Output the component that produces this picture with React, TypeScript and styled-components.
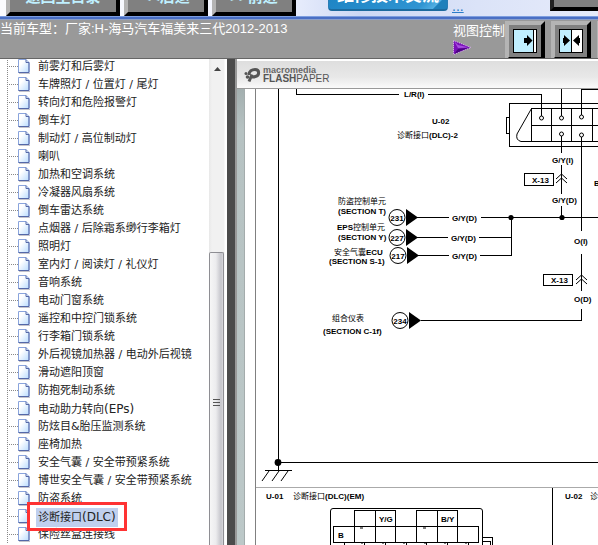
import React from "react";
import styled, { createGlobalStyle } from "styled-components";

const GlobalStyle = createGlobalStyle`
  * { box-sizing: border-box; }
  html, body, #root { height: 100%; }
  body {
    margin: 0;
    overflow: hidden;
    background: #fff;
    font-family: "Liberation Sans", "Noto Sans CJK SC", sans-serif;
  }
  button { font-family: inherit; margin: 0; }
`;

const Page = styled.div`
  height: 100vh;
  display: flex;
  flex-direction: column;
  overflow: hidden;
`;

const TopBar = styled.header`
  flex: none;
  height: 16px;
  display: flex;
  align-items: flex-end;
  padding-left: 6px;
  overflow: hidden;
  background: linear-gradient(90deg, #fbfcff 0%, #f2f5ff 45%, #cdd8f4 60%, #dbe3f8 80%, #e6ebfa 100%);
`;

const BlueRule = styled.div`
  flex: none;
  height: 4px;
  background: linear-gradient(180deg, #7d9ee0 0 1px, #4a6fc4 1px 3px, #8b9fc9 3px);
`;

const NavButton = styled.button<{ $width: number }>`
  flex: none;
  width: ${(p) => p.$width}px;
  height: 34px;
  margin-right: 4px;
  padding: 0 0 4px;
  border: 4px solid;
  border-color: #b4b4b4 #000 #000 #b4b4b4;
  background: #808080;
  color: #bff0ff;
  font-size: 15px;
  font-weight: bold;
  line-height: 16px;
`;

const ForumButton = styled.button`
  flex: none;
  width: 120px;
  height: 34px;
  margin: 0 4px 5px 28px;
  padding: 4px 0 0;
  border: 1px solid #2a7cb4;
  border-bottom: 2px solid #1c6a9e;
  border-radius: 4px;
  background: linear-gradient(135deg, #1b82c2, #2f94d2 80%, #51aee2 90%, #1f80bb 91%);
  color: #fff;
  font-size: 17px;
  font-weight: bold;
  line-height: 20px;
`;

const MoreLink = styled.a`
  color: #2a7cc8;
  font-size: 14px;
  line-height: 16px;
  margin-bottom: 2px;
`;

const CornerButton = styled.button`
  flex: 0 0 60px;
  height: 34px;
  margin: 0 -12px 5px auto;
  border: 4px solid;
  border-color: #b4b4b4 #000 #000 #222;
  background: #808080;
`;

const VehicleBar = styled.div`
  flex: none;
  height: 39px;
  display: flex;
  align-items: flex-start;
  background: #999;
  border-bottom: 1px solid #666;
  color: #fff;
  font-size: 13px;
  line-height: 18px;
  overflow: hidden;
`;

const VehicleName = styled.div`
  flex: 1 0 auto;
  white-space: nowrap;
`;

const ViewLabel = styled.div`
  flex: none;
  display: flex;
  flex-direction: column;
  padding-top: 2px;
  svg { display: block; }
`;

const ViewButtons = styled.div`
  flex: 0 0 93px;
  display: flex;
  gap: 6px;
  padding-top: 1px;
  overflow: hidden;
`;

const ViewButton = styled.button`
  flex: none;
  width: 40px;
  height: 40px;
  padding: 4px;
  border: 4px solid;
  border-color: #b4b4b4 #000 #000 #b4b4b4;
  background: #808080;
  svg { display: block; }
`;

const Body = styled.main`
  flex: 1;
  min-height: 0;
  display: flex;
`;

const Sidebar = styled.nav`
  flex: 0 0 209px;
  overflow: hidden;
  padding-left: 7px;
`;

const Tree = styled.ul`
  list-style: none;
  margin: -1px 0 0;
  padding: 0;
  background: repeating-linear-gradient(180deg, #888 0 1px, transparent 1px 2px) 0 0 / 1px 100% no-repeat;
`;

const TreeRow = styled.li`
  height: 18px;
  display: flex;
  align-items: center;
  position: relative;
`;

const Branch = styled.span`
  width: 9px;
  height: 1px;
  margin: 0 0 2px 2px;
  background: repeating-linear-gradient(90deg, #888 0 1px, transparent 1px 2px);
`;

const TreeLink = styled.a<{ $selected: boolean }>`
  margin-left: 6px;
  padding: 0 2px;
  color: #222;
  background: ${(p) => (p.$selected ? "#c0d0ee" : "transparent")};
  font-family: "DejaVu Sans", "Noto Sans CJK SC", sans-serif;
  font-size: 11px;
  line-height: 18px;
  text-decoration: none;
  white-space: nowrap;
`;

const Latin = styled.span`
  font-size: 12px;
`;

const RedFrame = styled.span`
  position: absolute;
  inset: -6px auto -5px 20px;
  width: 100px;
  border: 3px solid #f33;
  z-index: 1;
  pointer-events: none;
`;

const ScrollTrack = styled.div`
  flex: 0 0 18px;
  display: flex;
  flex-direction: column;
  background: linear-gradient(90deg, #e8e8e8, #f1f1f1 3px 15px, #fff 16px);
`;

const ScrollUp = styled.button`
  height: 17px;
  width: 16px;
  padding: 2px 0 0;
  border: 0;
  background: none;
  display: flex;
  align-items: center;
  justify-content: center;
`;

const ScrollThumb = styled.div`
  flex: 1;
  width: 15px;
  margin-top: 176px;
  padding-top: 6px;
  border: 1px solid #8e8e93;
  border-bottom: 0;
  border-radius: 2px 2px 0 0;
  background: linear-gradient(90deg, #f6f6f6, #ececee 45%, #c4c4ca 85%, #d8d8dc);
  display: flex;
  justify-content: center;
  align-items: center;
`;

const Splitter = styled.div`
  flex: 0 0 10px;
  background: #4b4b4b;
  border-right: 2px solid #999;
`;

const Viewer = styled.section`
  flex: 1;
  min-width: 0;
  display: flex;
  flex-direction: column;
`;

const PaperBar = styled.div`
  flex: none;
  height: 30px;
  padding: 0 0 0 7px;
  display: flex;
  align-items: center;
  gap: 2px;
  border-top: 2px solid #fff;
  border-bottom: 1px solid #999;
  background: linear-gradient(180deg, #dedede, #e8e8e8 60%, #fafafa);
  color: #555;
`;

const Brand = styled.div`
  display: flex;
  flex-direction: column;
  font-size: 10px;
  line-height: 9px;
`;

const BrandTop = styled.span`
  font-size: 9px;
  font-weight: bold;
  line-height: 8px;
  color: #666;
`;

const Desk = styled.div`
  flex: 1;
  min-height: 0;
  display: flex;
  overflow: hidden;
  padding-left: 7px;
  background: linear-gradient(180deg, #a3afaf, #b6c2c2 40px, #bcc8c8);
`;

const Sheet = styled.div`
  flex: 1;
  min-width: 0;
  overflow: hidden;
  background: #fff;
  border-left: 1px solid #a4acac;
  svg { display: block; }
`;

const items: { text: string; latin?: string; selected?: boolean }[] = [
  { text: "前雾灯和后雾灯" },
  { text: "车牌照灯 / 位置灯 / 尾灯" },
  { text: "转向灯和危险报警灯" },
  { text: "倒车灯" },
  { text: "制动灯 / 高位制动灯" },
  { text: "喇叭" },
  { text: "加热和空调系统" },
  { text: "冷凝器风扇系统" },
  { text: "倒车雷达系统" },
  { text: "点烟器 / 后除霜系缈行李箱灯" },
  { text: "照明灯" },
  { text: "室内灯 / 阅读灯 / 礼仪灯" },
  { text: "音响系统" },
  { text: "电动门窗系统" },
  { text: "遥控和中控门锁系统" },
  { text: "行李箱门锁系统" },
  { text: "外后视镜加热器 / 电动外后视镜" },
  { text: "滑动遮阳顶窗" },
  { text: "防抱死制动系统" },
  { text: "电动助力转向", latin: "(EPs)" },
  { text: "防炫目&胎压监测系统" },
  { text: "座椅加热" },
  { text: "安全气囊 / 安全带预紧系统" },
  { text: "博世安全气囊 / 安全带预紧系统" },
  { text: "防盗系统" },
  { text: "诊断接口", latin: "(DLC)", selected: true },
  { text: "保险丝盒连接线" },
];

const PageIcon = () => (
  <svg width="12" height="18" viewBox="0 0 12 18" aria-hidden="true">
    <defs>
      <linearGradient id="leaf" x1="0" y1="0" x2="1" y2="1">
        <stop offset="0.3" stopColor="#fff" />
        <stop offset="1" stopColor="#b9dcff" />
      </linearGradient>
    </defs>
    <path d="M.5 1.5H8L11 4.5V14.5H.5Z" fill="url(#leaf)" stroke="#8aa4dc" />
    <path d="M8 1.5V4.500H11V14.500H.5" fill="none" stroke="#5468a8" />
    <path d="M1 15.500H12" stroke="#c4c4cc" />
  </svg>
);

const ExpandIcon = () => (
  <svg width="24" height="24" viewBox="0 0 24 24" aria-hidden="true">
    <rect width="24" height="24" fill="#000" />
    <path d="M1 1H20V23H1Z" fill="#c0efff" />
    <path d="M21 1H23V23H21Z" fill="#fff" />
    <path d="M11 9H14V6L19.500 11.500L14 17V14H11Z" fill="#000" />
  </svg>
);

const SplitIcon = () => (
  <svg width="24" height="24" viewBox="0 0 24 24" aria-hidden="true">
    <rect width="24" height="24" fill="#000" />
    <path d="M1 1H12V23H1Z" fill="#c0efff" />
    <path d="M13 1H23V23H13Z" fill="#fff" />
    <path d="M4 9H5V6L11 11.500L5 17V14H4ZM21 9H20V6L14 11.500L20 17V14H21Z" fill="#000" />
  </svg>
);

const Label = styled.text`
  font-family: "Liberation Sans", "Noto Sans CJK SC", sans-serif;
  font-size: 8px;
  font-weight: bold;
  fill: #000;
`;

const Han = styled.tspan`
  font-weight: normal;
`;

const sources = [
  { x: 397, y: 217, code: "231", wire: 452 },
  { x: 397, y: 237, code: "227", wire: 451 },
  { x: 398, y: 255, code: "217", wire: 452 },
  { x: 400, y: 320, code: "234", wire: 0 },
];

const WiringDiagram = () => (
  <svg width="353" height="456" viewBox="245 89 353 456" role="img" aria-label="诊断接口 (DLC)">
    <g fill="none" stroke="#808080">
      <path d="M255.500 89V545" />
      <path d="M256 487.500H598" stroke="#aaa" />
    </g>
    <g fill="none" stroke="#000" shapeRendering="crispEdges">
      <path d="M278.500 89V470M296.500 89V94.500H399M428 94.500H541.500V116" />
      <path d="M561.500 89V116M581.500 89V115M581 89.500H598" />
      <path d="M598 103.500H509.500V146.500H598M509 117.500H506.500V133.500H509" />
      <path d="M598 108.500H531.500V141.500M551.500 108V141M571.500 108V141M592.500 108V141M531 125.500H598M521 141.500H598" />
      <path d="M561.500 136V153M561.500 165V194M561.500 206V217M581.500 137V231M581.500 254V291M581.500 309V320.500H421" />
      <path d="M524.500 173.500H553.500V185.500H524.500ZM543.500 274.500H572.500V285.500H543.500Z" />
      <path d="M417 217.500H449M481 217.500H598M417 237.500H448M479 237.500H511M418 255.500H449M480 255.500H511.500V217" />
      <path d="M278 462.500H598M265 470.500H292M552.500 488V545" />
      <path d="M354.500 526V510.500H395.500V526M375.500 510V542M416.500 526V510.500H457.500V526M437.500 510V542" />
      <path d="M333.500 526.500H478.500V542.500H333.500ZM354.500 526V542M395.500 526V542M416.500 526V542M457.500 526V542" />
      <path d="M344.500 542V545M364.500 542V545M385.500 542V545M406.500 542V545M426.500 542V545M447.500 542V545M468.500 542V545" />
      <path d="M483 537.500H492.500V545M483 541.500H490.500V545" />
    </g>
    <g fill="none" stroke="#000">
      <path d="M531.500 108.500L517 134Q515.500 140 521 141.500" />
      <path d="M330.500 545V511Q330.500 508.500 333 508.500H480Q482.500 508.500 482.500 511V545" />
      <path d="M269 471L262 481M279 471L272 481M288 471L281 481" />
      <path d="M556 179L561.500 174L567 179M556 183L561.500 178L567 183M576 280L581.500 275L587 280M576 284L581.500 279L587 284" />
      <path d="M360 528H363M423 528H426M361 543H363M382 543H384M403 543H405M424 543H426M444 543H446M465 543H467" />
    </g>
    <g fill="#fff" stroke="#000">
      <circle cx="541.500" cy="118" r="2" />
      <circle cx="561.500" cy="118" r="2" />
      <circle cx="581.500" cy="117" r="2" />
      <circle cx="561.500" cy="134" r="2" />
      <circle cx="581.500" cy="135" r="2" />
    </g>
    <circle cx="511" cy="217.500" r="2.600" />
    <circle cx="562" cy="217.500" r="2.600" />
    <circle cx="278" cy="462.500" r="3.400" />
    {sources.map((s) => (
      <g key={s.code}>
        <circle cx={s.x} cy={s.y + 0.5} r="8" fill="#fff" stroke="#000" />
        <path d={`M${s.x + 9} ${s.y - 8}L${s.x + 21} ${s.y + 0.5}L${s.x + 9} ${s.y + 9}Z`} />
        <Label x={s.x} y={s.y + 4} textAnchor="middle">{s.code}</Label>
        {s.wire > 0 && <Label x={s.wire} y={s.y + 4}>G/Y(D)</Label>}
      </g>
    ))}
    <Label x="404" y="97">L/R(I)</Label>
    <Label x="432" y="124">U-02</Label>
    <Label x="397" y="138"><Han>诊断接口</Han>(DLC)-2</Label>
    <Label x="552" y="163">G/Y(I)</Label>
    <Label x="552" y="203">G/Y(D)</Label>
    <Label x="532" y="183">X-13</Label>
    <Label x="594" y="186">B</Label>
    <Label x="574" y="244">O(I)</Label>
    <Label x="551" y="283">X-13</Label>
    <Label x="574" y="302">O(D)</Label>
    <Label x="338" y="204"><Han>防盗控制单元</Han></Label>
    <Label x="338" y="214">(SECTION T)</Label>
    <Label x="337" y="230">EPS<Han>控制单元</Han></Label>
    <Label x="338" y="240">(SECTION Y)</Label>
    <Label x="334" y="255"><Han>安全气囊</Han>ECU</Label>
    <Label x="329" y="264">(SECTION S-1)</Label>
    <Label x="332" y="321"><Han>组合仪表</Han></Label>
    <Label x="323" y="334">(SECTION C-1f)</Label>
    <Label x="266" y="499">U-01</Label>
    <Label x="293" y="499"><Han>诊断接口</Han>(DLC)(EM)</Label>
    <Label x="565" y="499">U-02</Label>
    <Label x="590" y="499"><Han>诊断接口</Han></Label>
    <Label x="379" y="522">Y/G</Label>
    <Label x="338" y="538">B</Label>
    <Label x="441" y="522">B/Y</Label>
  </svg>
);

export default function App() {
  return (
    <Page>
      <GlobalStyle />
      <TopBar>
        <NavButton $width={114}>返回主目录</NavButton>
        <NavButton $width={84}>&lt;&lt;后退</NavButton>
        <NavButton $width={84}>&gt;&gt;前进</NavButton>
        <ForumButton>维修技术交流</ForumButton>
        <MoreLink href="#more">...</MoreLink>
        <CornerButton aria-label="菜单" />
      </TopBar>
      <BlueRule />
      <VehicleBar>
        <VehicleName>当前车型：厂家:H-海马汽车福美来三代2012-2013</VehicleName>
        <ViewLabel>
          视图控制
          <svg width="19" height="15" viewBox="0 0 19 15" aria-hidden="true">
            <path d="M.5.5L18 7.500L.5 14.500Z" fill="#7a10b8" stroke="#e2c4f0" strokeWidth="1" strokeDasharray="1 1" />
            <path d="M1 1L5 5L16 7.500L5 8Z" fill="#a850e0" />
            <path d="M1 14L5 9L16 7.500Z" fill="#4c0484" />
          </svg>
        </ViewLabel>
        <ViewButtons>
          <ViewButton aria-label="展开"><ExpandIcon /></ViewButton>
          <ViewButton aria-label="分栏"><SplitIcon /></ViewButton>
          <ViewButton aria-label="还原" />
        </ViewButtons>
      </VehicleBar>
      <Body>
        <Sidebar>
          <Tree>
            {items.map((item) => (
              <TreeRow key={item.text}>
                <Branch />
                <PageIcon />
                <TreeLink href="#section" $selected={!!item.selected}>
                  {item.text}
                  {item.latin && <Latin>{item.latin}</Latin>}
                </TreeLink>
                {item.selected && <RedFrame />}
              </TreeRow>
            ))}
          </Tree>
        </Sidebar>
        <ScrollTrack>
          <ScrollUp aria-label="向上滚动">
            <svg width="7" height="4" viewBox="0 0 7 4"><path d="M0 4L3.500 0L7 4Z" fill="#444" /></svg>
          </ScrollUp>
          <ScrollThumb>
            <svg width="8" height="9" viewBox="0 0 8 9"><path d="M0 1.500H7M0 4.500H7M0 7.500H7" stroke="#555" /></svg>
          </ScrollThumb>
        </ScrollTrack>
        <Splitter />
        <Viewer>
          <PaperBar>
            <svg width="17" height="16" viewBox="0 0 17 16" aria-hidden="true">
              <path d="M5 14.500L8 7.500M5 8C5 4 8 2.500 11 2.500C16 2.500 15.500 8.500 11.500 9.500C10 10 8 10 7 9.500" fill="none" stroke="#555" strokeWidth="3" />
              <circle cx="2" cy="6.500" r="1.500" fill="#555" />
              <circle cx="3.500" cy="10" r="1.800" fill="#555" />
            </svg>
            <Brand>
              <BrandTop>macromedia</BrandTop>
              <span><b>FLASH</b>PAPER</span>
            </Brand>
          </PaperBar>
          <Desk>
            <Sheet>
              <WiringDiagram />
            </Sheet>
          </Desk>
        </Viewer>
      </Body>
    </Page>
  );
}
